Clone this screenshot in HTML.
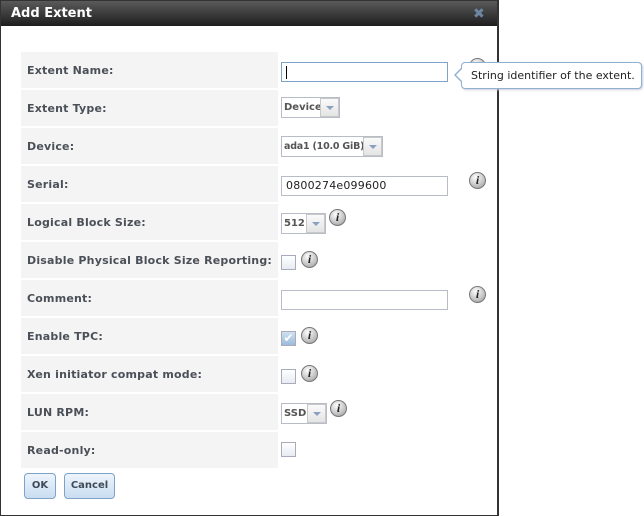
<!DOCTYPE html>
<html><head><style>
body{margin:0;width:644px;height:516px;background:#fff;position:relative;overflow:hidden;font-family:"DejaVu Sans","Liberation Sans",sans-serif;}
.dlg{position:absolute;left:0;top:0;width:496px;height:514px;border:1px solid #333;border-right:2px solid #333;background:#fff;}
.title{position:absolute;left:0;top:0;width:496px;height:25px;background:linear-gradient(#5a5a5a,#1e1e1e);color:#fff;font-weight:bold;font-size:13px;line-height:25px;text-indent:10px;}
.x{position:absolute;left:472px;top:6px;color:#6d87a3;font-size:14px;font-weight:bold;line-height:14px}
.row{position:absolute;left:21px;width:257px;height:36px;background:#f4f4f4;font-weight:bold;font-size:11px;letter-spacing:0.2px;color:#4b5058;line-height:38px;text-indent:6px;}
.inp{position:absolute;left:281px;width:165px;height:18px;border:1px solid #b8bcc6;background:#fff;font-size:11px;letter-spacing:0.2px;line-height:18px;text-indent:4px;color:#222}
.sel{position:absolute;left:281px;border:1px solid #b8bcc6;background:#fff;font-size:10px;font-weight:bold;color:#555;line-height:19px;padding-left:2px;overflow:hidden;white-space:nowrap;box-sizing:border-box;height:21px}
.sel b{position:absolute;right:0;top:0;width:17px;height:17px;border:1px solid #c8c8c8;background:linear-gradient(#fafafa,#e4e4e4);}
.sel b:after{content:"";position:absolute;left:5px;top:7px;border-left:4px solid transparent;border-right:4px solid transparent;border-top:4px solid #8aa0c0}
.cb{position:absolute;left:281px;width:13px;height:13px;border:1px solid #aab;background:linear-gradient(#fff,#e6ecf3)}
.ic{position:absolute;width:15px;height:15px;border-radius:50%;border:1px solid #777;background:radial-gradient(circle at 40% 30%,#fff,#b8b8b8 70%,#888);font:italic bold 12px "Liberation Serif",serif;color:#222;text-align:center;line-height:15px}
.btn{position:absolute;top:473px;height:24px;border:1px solid #7fa3c8;border-radius:4px;background:linear-gradient(#eef5fc,#c9ddf1);font-weight:bold;font-size:10px;color:#3f4a58;text-align:center;line-height:24px}
.tip{position:absolute;left:461px;top:62px;width:179px;height:25px;border:1px solid #8fb0d0;border-radius:4px;background:#fff;font-size:11px;line-height:25px;text-indent:9px;color:#222;box-shadow:1px 1px 2px #ccd}
</style></head><body>
<div class="dlg">
<div class="title">Add Extent</div><div class="x">✖</div>
</div>
<div class="row" style="top:52px">Extent Name:</div>
<div class="row" style="top:90px">Extent Type:</div>
<div class="row" style="top:128px">Device:</div>
<div class="row" style="top:166px">Serial:</div>
<div class="row" style="top:204px">Logical Block Size:</div>
<div class="row" style="top:242px">Disable Physical Block Size Reporting:</div>
<div class="row" style="top:280px">Comment:</div>
<div class="row" style="top:318px">Enable TPC:</div>
<div class="row" style="top:356px">Xen initiator compat mode:</div>
<div class="row" style="top:394px">LUN RPM:</div>
<div class="row" style="top:432px">Read-only:</div>

<div class="inp" style="top:62px;border-color:#7fa3c8"><span style="display:inline-block;width:1px;height:13px;background:#000;vertical-align:middle"></span></div>
<div class="ic" style="left:469px;top:58px">i</div>
<div class="sel" style="top:97px;width:59px">Device<b></b></div>
<div class="sel" style="top:136px;width:102px;font-size:9.5px;letter-spacing:-0.2px">ada1 (10.0 GiB)<b></b></div>
<div class="inp" style="top:176px">0800274e099600</div>
<div class="ic" style="left:469px;top:172px">i</div>
<div class="sel" style="top:213px;width:45px">512<b></b></div>
<div class="ic" style="left:329px;top:209px">i</div>
<div class="cb" style="top:255px"></div>
<div class="ic" style="left:301px;top:251px">i</div>
<div class="inp" style="top:290px"></div>
<div class="ic" style="left:469px;top:286px">i</div>
<div class="cb" style="top:331px;background:linear-gradient(#cfe0f0,#9cbcdc);color:#fff;font-size:12px;line-height:13px;text-align:center">✔</div>
<div class="ic" style="left:301px;top:327px">i</div>
<div class="cb" style="top:369px"></div>
<div class="ic" style="left:301px;top:365px">i</div>
<div class="sel" style="top:403px;width:46px">SSD<b></b></div>
<div class="ic" style="left:330px;top:400px">i</div>
<div class="cb" style="top:442px"></div>

<div class="btn" style="left:24px;width:30px">OK</div>
<div class="btn" style="left:64px;width:49px">Cancel</div>

<div class="tip">String identifier of the extent.</div>
<div style="position:absolute;left:454px;top:67px;width:0;height:0;border-top:8px solid transparent;border-bottom:8px solid transparent;border-right:8px solid #8fb0d0"></div>
<div style="position:absolute;left:456px;top:68px;width:0;height:0;border-top:7px solid transparent;border-bottom:7px solid transparent;border-right:7px solid #fff"></div>
</body></html>
